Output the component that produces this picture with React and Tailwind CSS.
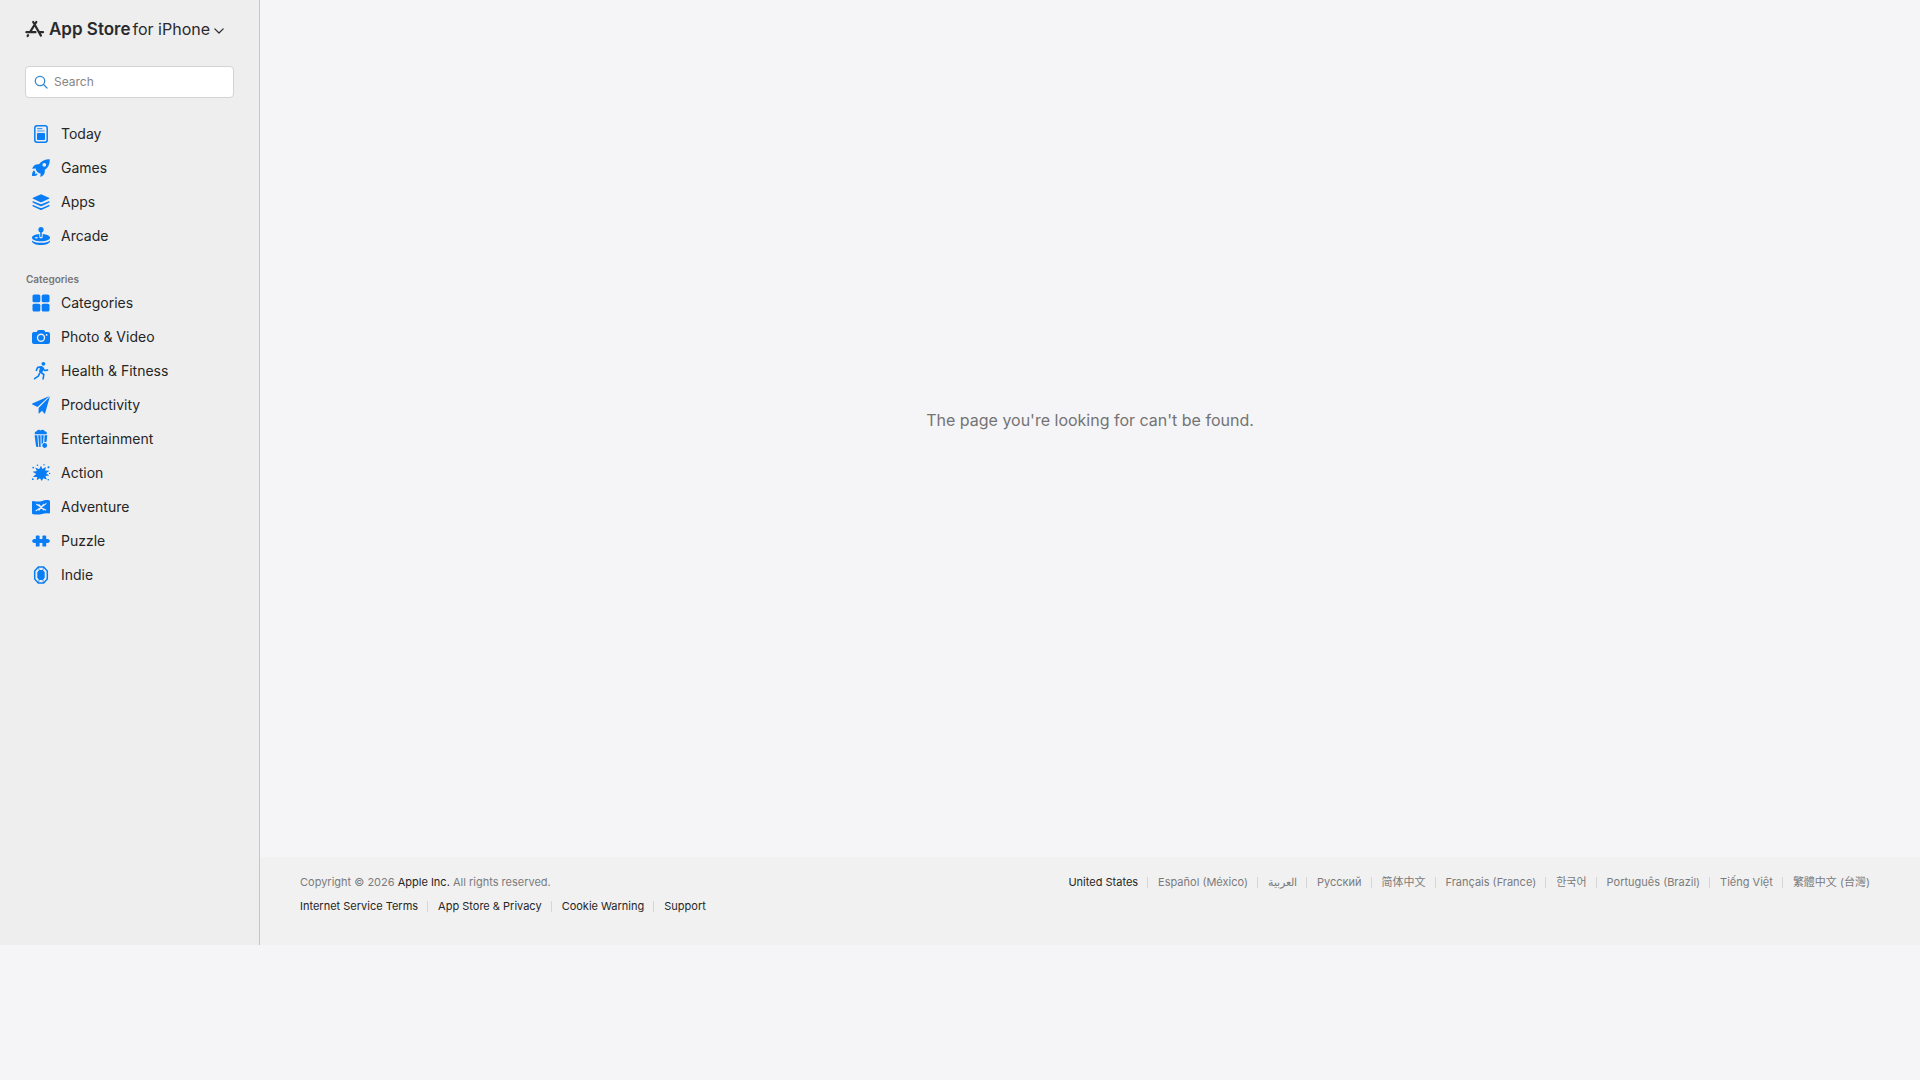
import React, { useState } from "react";

const icons = {
  today: (
    <>
      <rect x="3.8" y="1.8" width="12.4" height="16.4" rx="2.2" fill="none" stroke="currentColor" strokeWidth="1.5" />
      <path d="M6.2 4.6h5.2M6.2 7h7.4" stroke="currentColor" strokeWidth="1.2" opacity="0.75" />
      <rect x="6" y="9" width="8" height="7" rx="0.8" />
    </>
  ),
  games: (
    <>
      <path
        fillRule="evenodd"
        d="M18.8 1.2c-4.6-.1-8.2 1.5-10.8 5.1-2.4-.4-4.4.3-5.9 2.5l-.9 1.9 3.5-.2c.1 2.6 2.2 4.7 4.900 4.9l-.2 3.500 1.900-.9c2.200-1.500 2.900-3.500 2.400-5.900 3.600-2.600 5.200-6.300 5.100-10.900zM13.300 4.900a1.900 1.900 0 1 0 0 3.800 1.900 1.900 0 0 0 0-3.800z"
      />
      <path d="M3.200 12.200c-1.900 1.200-2.300 3.300-2.100 5.800 1.500.2 3.900.3 5.500-1.800l-1.200-.6-1.500.7.500-1.600z" />
    </>
  ),
  apps: (
    <>
      <path d="M10 2.200 18 5.800Q18.900 6.300 18 6.800L10.900 10Q10 10.400 9.100 10L2 6.800Q1.100 6.300 2 5.800z" />
      <path d="M1.600 8.900 9.200 12.100Q10 12.400 10.800 12.100L18.400 8.900V10.100Q18.400 10.600 17.900 10.800L10.900 14.100Q10 14.500 9.100 14.100L2.100 10.800Q1.600 10.600 1.600 10.100z" />
      <path d="M1.600 12.700 9.200 15.900Q10 16.200 10.800 15.900L18.400 12.700V13.900Q18.400 14.400 17.900 14.600L10.900 17.800Q10 18.200 9.100 17.800L2.100 14.600Q1.600 14.400 1.600 13.900z" />
    </>
  ),
  arcade: (
    <>
      <circle cx="10" cy="3.7" r="2.6" />
      <path d="M9.2 5.500h1.600v5.500H9.200z" />
      <path
        fillRule="evenodd"
        d="M8.300 8.100C4.300 8.400 1 9.800 1 11.700c0 2.100 4 3.500 9 3.500s9-1.400 9-3.500c0-1.900-3.300-3.300-7.300-3.600v2.800c0 .8-.8 1.300-1.700 1.300s-1.700-.5-1.700-1.300zM3.800 11.800a1.600.8 0 1 0 3.200 0 1.600.8 0 1 0-3.200 0z"
      />
      <path d="M1 14.400c1.200 1.500 4.800 2.300 9 2.300s7.800-.8 9-2.300v.8c0 2.100-4 3.800-9 3.800s-9-1.700-9-3.800z" />
    </>
  ),
  categories: (
    <>
      <rect x="1.500" y="1.500" width="7.800" height="7.800" rx="1.600" />
      <rect x="10.700" y="1.500" width="7.800" height="7.800" rx="1.600" />
      <rect x="1.500" y="10.700" width="7.800" height="7.800" rx="1.600" />
      <rect x="10.700" y="10.700" width="7.800" height="7.800" rx="1.600" />
    </>
  ),
  photo: (
    <>
      <path d="M3 5h2.700l.9-1.500Q7 3 7.700 3h4.600q.7 0 1.100.5l.9 1.500H17q2 0 2 2v8q0 2-2 2H3q-2 0-2-2V7q0-2 2-2z" />
      <circle cx="10" cy="10.700" r="3.500" fill="none" stroke="#eeeeef" strokeWidth="1.400" />
      <circle cx="15.600" cy="7.900" r="0.900" fill="#eeeeef" />
    </>
  ),
  health: (
    <>
      <circle cx="12.400" cy="2.800" r="1.900" />
      <path
        d="M5.300 9.300 6.700 6.400 10.800 5.900M11.800 7l1.700 2.500 3.100-.4M9.600 11.200l3.200 2.300-.7 4.500M8.600 12.300 7.300 15.100 3.600 17.700"
        fill="none"
        stroke="currentColor"
        strokeWidth="1.600"
        strokeLinecap="round"
        strokeLinejoin="round"
      />
      <path d="M9.200 5.500 13.100 6.700 11 12.200 7.900 11z" />
    </>
  ),
  productivity: (
    <>
      <path d="M18.400.9 1.300 8.600Q.6 9 1.300 9.400L6.500 12z" />
      <path d="M18.900 1.500 7.600 12.900V18q.1.900.8.300L11 15.800l2.300 2.700q.5.500.8-.2z" />
    </>
  ),
  entertainment: (
    <>
      <path d="M4 5.300a2 2 0 0 1 1.700-3 2.400 2.400 0 0 1 4-.7 2.400 2.400 0 0 1 4 .7 2 2 0 0 1 1.900 3z" />
      <path d="M3.600 6.200h2.700l1 11.800H6.200q-1.100 0-1.200-1.100zM7.200 6.200h2.300l.2 11.800H8.200zM10.400 6.200h2.300l-.6 7.600-1.500 1.400zM13.600 6.200h2.700l-.7 6.600-2.300.4z" />
      <circle cx="13.700" cy="16.500" r="2.400" />
    </>
  ),
  action: (
    <>
      <path d="M10 2.800l1.400 3.300 3.500-2.200-.7 3.600 4.200.2-3.300 2.500 3.100 2.400-3.800.4 1.600 3.500-3.700-1.300L10.800 18l-1.900-2.700-3.200 2 .5-3.300-4.400-.1 3.400-3L1.600 8.700l4.300-.7-1.700-3.600 3.900 1.800z" />
      <circle cx="2.200" cy="4.600" r="0.900" />
      <circle cx="17.500" cy="4.200" r="1" />
      <circle cx="6.500" cy="2.200" r="0.800" />
      <circle cx="18.600" cy="10.400" r="0.700" />
      <circle cx="1.800" cy="16.200" r="0.900" />
      <circle cx="17.300" cy="16.800" r="0.800" />
      <circle cx="13" cy="1.700" r="0.700" />
    </>
  ),
  adventure: (
    <>
      <path d="M1 4.900Q1 3.800 2.200 3.900c3 .6 5.200.9 8.100.3 2.800-.7 4.700-1.300 7.400-1q1.300.1 1.300 1.300v10.900q0 1-1.200 1-3.700-.3-6.800.5-4 1-8.600.3Q1 17 1 15.900z" />
      <path d="M5.600 7.300 8.400 9.200h3.400l3.200-2.600M5 13.700l3.600-2.300 3 .1 3.200 1.600M8 7.600l4.600 5.200M12.600 7.400 8 13.200" fill="none" stroke="#eeeeef" strokeWidth="1.100" strokeLinecap="round" />
    </>
  ),
  puzzle: (
    <path d="M4.800 5.300Q4.800 4.400 5.700 4.400h2q.9 0 .9.900v2.400q.2.600.7.400a1.300 1.300 0 0 1 1.400 0q.6.200.7-.4V5.300q0-.9.900-.9h2q.9 0 .9.900v2.500q.4.500 1 .3a2 2 0 1 1 0 3.800q-.6-.2-1 .3v2.500q0 .9-.9.900h-2q-.9 0-.9-.9v-2.400q-.1-.6-.7-.4a1.300 1.300 0 0 1-1.400 0q-.5-.2-.7.400v2.400q0 .9-.9.900h-2q-.9 0-.9-.9v-2.500q-.4-.5-1-.3a2 2 0 1 1 0-3.800q.6.200 1-.3z" />
  ),
  indie: (
    <>
      <path d="M7.300 2h5.400l3.600 3.900v8.200L12.700 18H7.300l-3.600-3.900V5.900z" fill="none" stroke="currentColor" strokeWidth="1.500" strokeLinejoin="round" />
      <path d="M8.100 5h3.800L13.700 7.200v5.600L11.900 15H8.100L6.300 12.800V7.200z" />
      <path d="M7.300 2 8.100 5M12.700 2 11.900 5M7.300 18 8.100 15M12.700 18 11.900 15" stroke="currentColor" strokeWidth="0.700" />
    </>
  ),
};

const mainLinks = [
  { icon: "today", label: "Today" },
  { icon: "games", label: "Games" },
  { icon: "apps", label: "Apps" },
  { icon: "arcade", label: "Arcade" },
];

const categoryLinks = [
  { icon: "categories", label: "Categories" },
  { icon: "photo", label: "Photo & Video" },
  { icon: "health", label: "Health & Fitness" },
  { icon: "productivity", label: "Productivity" },
  { icon: "entertainment", label: "Entertainment" },
  { icon: "action", label: "Action" },
  { icon: "adventure", label: "Adventure" },
  { icon: "puzzle", label: "Puzzle" },
  { icon: "indie", label: "Indie" },
];

const legalLinks = [
  "Internet Service Terms",
  "App Store & Privacy",
  "Cookie Warning",
  "Support",
];

const languages = [
  { label: "United States", lang: "en", current: true },
  { label: "Español (México)", lang: "es" },
  { label: "العربية", lang: "ar" },
  { label: "Русский", lang: "ru" },
  { label: "简体中文", lang: "zh-Hans" },
  { label: "Français (France)", lang: "fr" },
  { label: "한국어", lang: "ko" },
  { label: "Português (Brazil)", lang: "pt" },
  { label: "Tiếng Việt", lang: "vi" },
  { label: "繁體中文 (台灣)", lang: "zh-Hant" },
];

function NavList({ links }) {
  return (
    <ul>
      {links.map((link) => (
        <li key={link.label}>
          <a href="#" className="flex h-[34px] items-center gap-[10px] px-[6px] text-sm text-[#262626]">
            <svg viewBox="0 0 20 20" fill="currentColor" className="size-5 shrink-0 text-[#087df5]">
              {icons[link.icon]}
            </svg>
            {link.label}
          </a>
        </li>
      ))}
    </ul>
  );
}

function Sidebar() {
  const [term, setTerm] = useState("");

  return (
    <aside className="w-[260px] shrink-0 border-r border-[#c6c6c8] bg-[#eeeeef] px-[25px]">
      <button type="button" className="flex h-[58px] items-center text-[#2a2a2c]">
        <svg viewBox="0 0 20 18" className="mr-1 h-[18px] w-5" fill="none" stroke="currentColor" strokeWidth="2.200" strokeLinecap="round">
          <path d="M8.200 2 15.900 15.600M11.300 2 5 12.200M1.400 12.200H10.500M14.800 12.200H18M3.100 15.100 2.600 16" />
        </svg>
        <span className="flex items-baseline gap-[2px] text-base">
          <span className="text-[17px] leading-6 font-semibold">App Store</span>
          <span>for iPhone</span>
        </span>
        <svg viewBox="0 0 10 6" className="mt-1 ml-1 h-[6px] w-[10px]" fill="none" stroke="currentColor" strokeWidth="1.200" strokeLinecap="round" strokeLinejoin="round">
          <path d="M.8.800 5 5 9.200.800" />
        </svg>
      </button>

      <label className="mt-2 flex h-8 items-center gap-[6px] rounded border border-[#d3d3d5] bg-white px-2">
        <svg viewBox="0 0 14 14" className="size-[14px] shrink-0 text-[#3286cf]" fill="none" stroke="currentColor" strokeWidth="1.300" strokeLinecap="round">
          <circle cx="6" cy="6" r="4.700" />
          <path d="M9.500 9.500 13 13" />
        </svg>
        <input
          type="text"
          aria-label="Search"
          placeholder="Search"
          value={term}
          onChange={(e) => setTerm(e.target.value)}
          className="w-full min-w-0 text-xs text-[#262626] outline-none placeholder:text-[#858585]"
        />
      </label>

      <nav className="mt-[19px]">
        <NavList links={mainLinks} />
        <h2 className="mt-[19px] pl-px text-[10px] leading-[14px] font-semibold text-[#757577]">
          Categories
        </h2>
        <NavList links={categoryLinks} />
      </nav>
    </aside>
  );
}

function Footer() {
  return (
    <footer className="flex min-h-[88px] items-start justify-between bg-[#f1f1f1] pt-[13px] pr-[50px] pl-10 text-[11px] leading-6 text-[#7b7b7b]">
      <div>
        <p>
          Copyright © 2026{" "}
          <a href="#" className="text-[#262626]">
            Apple Inc.
          </a>{" "}
          All rights reserved.
        </p>
        <ul className="flex items-center text-[#262626]">
          {legalLinks.map((label) => (
            <li key={label} className="group flex items-center">
              <a href="#">{label}</a>
              <span className="mr-[10px] ml-[9px] h-[11px] w-px bg-[#d6d6d6] group-last:hidden" />
            </li>
          ))}
        </ul>
      </div>
      <ul className="flex items-center">
        {languages.map((item) => (
          <li key={item.lang} className="group flex items-center">
            <a href="#" lang={item.lang} className={item.current ? "text-[#262626]" : ""}>
              {item.label}
            </a>
            <span className="mr-[10px] ml-[9px] h-[11px] w-px bg-[#d6d6d6] group-last:hidden" />
          </li>
        ))}
      </ul>
    </footer>
  );
}

function App() {
  return (
    <div className="min-h-screen bg-[#f5f5f7] font-[Inter,'Noto_Sans_CJK_SC',sans-serif]">
      <div className="flex">
        <Sidebar />
        <div className="flex flex-1 flex-col">
          <main className="flex min-h-[857px] flex-col items-center pt-[408px]">
            <p className="text-base text-[#737375]">
              The page you're looking for can't be found.
            </p>
          </main>
          <Footer />
        </div>
      </div>
    </div>
  );
}

export default App;
